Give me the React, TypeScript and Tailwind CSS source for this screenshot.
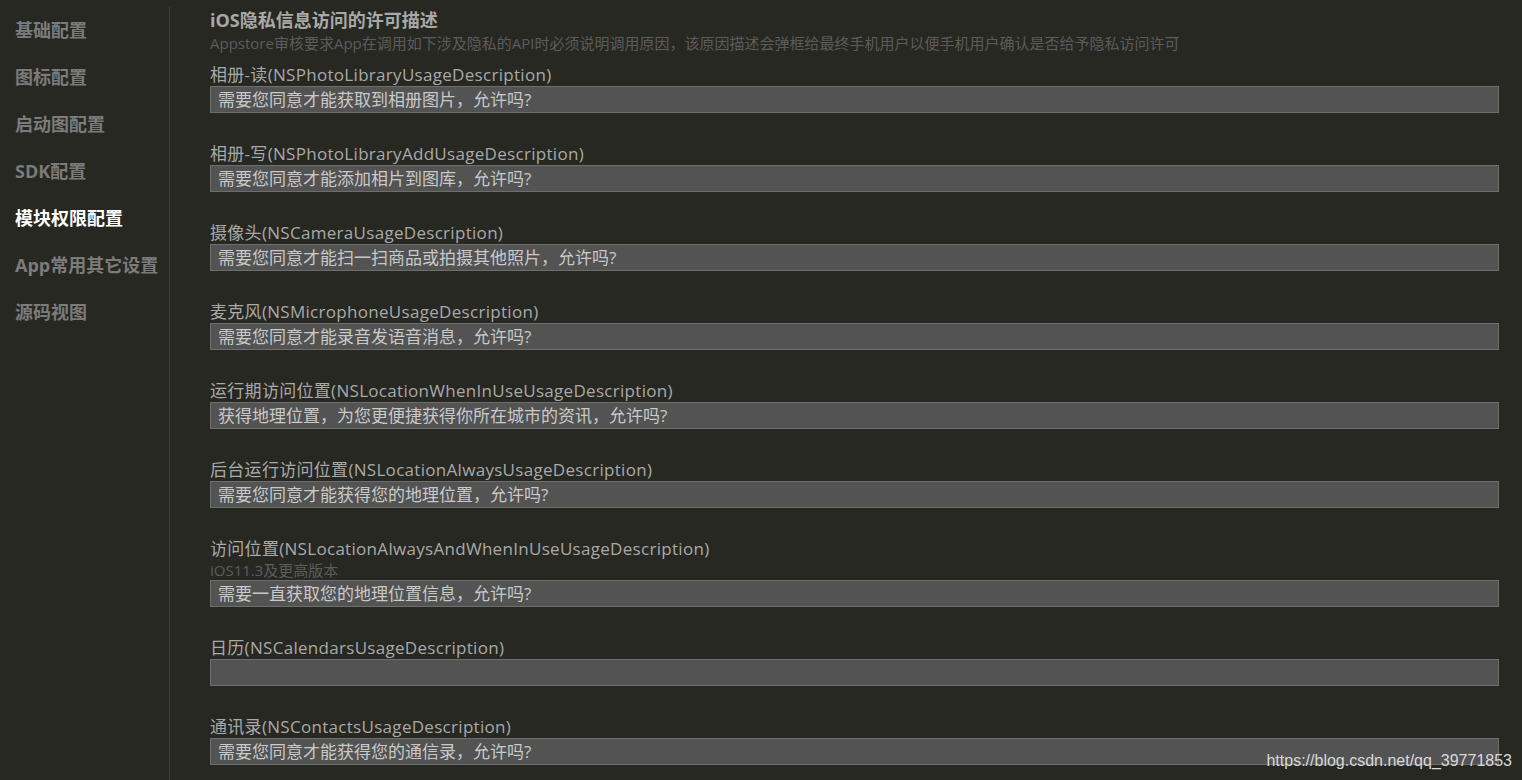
import React from 'react';

const navItems = ['基础配置', '图标配置', '启动图配置', 'SDK配置', '模块权限配置', 'App常用其它设置', '源码视图'];

type Row = { label: string; hint?: string; value: string };

const rows: Row[] = [
    { label: '相册-读(NSPhotoLibraryUsageDescription)', value: '需要您同意才能获取到相册图片，允许吗?' },
    { label: '相册-写(NSPhotoLibraryAddUsageDescription)', value: '需要您同意才能添加相片到图库，允许吗?' },
    { label: '摄像头(NSCameraUsageDescription)', value: '需要您同意才能扫一扫商品或拍摄其他照片，允许吗?' },
    { label: '麦克风(NSMicrophoneUsageDescription)', value: '需要您同意才能录音发语音消息，允许吗?' },
    { label: '运行期访问位置(NSLocationWhenInUseUsageDescription)', value: '获得地理位置，为您更便捷获得你所在城市的资讯，允许吗?' },
    { label: '后台运行访问位置(NSLocationAlwaysUsageDescription)', value: '需要您同意才能获得您的地理位置，允许吗?' },
    { label: '访问位置(NSLocationAlwaysAndWhenInUseUsageDescription)', hint: 'iOS11.3及更高版本', value: '需要一直获取您的地理位置信息，允许吗?' },
    { label: '日历(NSCalendarsUsageDescription)', value: '' },
    { label: '通讯录(NSContactsUsageDescription)', value: '需要您同意才能获得您的通信录，允许吗?' },
];

const font = { fontFamily: '"Open Sans", "Noto Sans CJK SC", sans-serif' };

export default function App() {
    return (
        <div className="relative h-[780px] overflow-hidden bg-[#272822] flex" style={font}>
            {/* Sidebar */}
            <aside className="w-[170px] shrink-0 flex flex-col pt-[7px]">
                <div className="border-r border-[#3e3f3a] flex-1 flex flex-col pt-[10px] pl-[15px] gap-[21px]">
                    {navItems.map((item) => (
                        <div
                            key={item}
                            className={
                                'text-[18px] font-bold leading-[26px] ' +
                                (item === '模块权限配置' ? 'text-white' : 'text-[#7b7b7b]')
                            }
                        >
                            {item}
                        </div>
                    ))}
                </div>
            </aside>

            {/* Content */}
            <main className="flex-1 pl-[40px] pr-[23px] pt-[8px]">
                <h1 className="text-[18px] font-bold leading-[24px] text-[#a8a8a8]">iOS隐私信息访问的许可描述</h1>
                <p className="text-[15px] leading-[22px] text-[#5c5c5c] mb-[10px]">
                    Appstore审核要求App在调用如下涉及隐私的API时必须说明调用原因，该原因描述会弹框给最终手机用户以便手机用户确认是否给予隐私访问许可
                </p>
                <div className="flex flex-col gap-[30px]">
                    {rows.map((row) => (
                        <div key={row.label}>
                            <div className="text-[17px] leading-[22px] tracking-[0.3px] text-[#a9a9a9]">{row.label}</div>
                            {row.hint && (
                                <div className="text-[15px] leading-[18px] text-[#5c5c5c] mt-[1px] mb-[1px]">{row.hint}</div>
                            )}
                            <div className="h-[27px] bg-[#535353] border border-[#6e6e6e] px-[7px] text-[17px] leading-[25px] text-[#c9c9c9]">
                                {row.value}
                            </div>
                        </div>
                    ))}
                </div>
            </main>

            {/* Watermark */}
            <div
                className="absolute right-[10px] bottom-[7px] text-[16px] text-[#d8d8d8]"
                style={{ fontFamily: '"Liberation Sans", Arial, sans-serif' }}
            >
                https://blog.csdn.net/qq_39771853
            </div>
        </div>
    );
}
